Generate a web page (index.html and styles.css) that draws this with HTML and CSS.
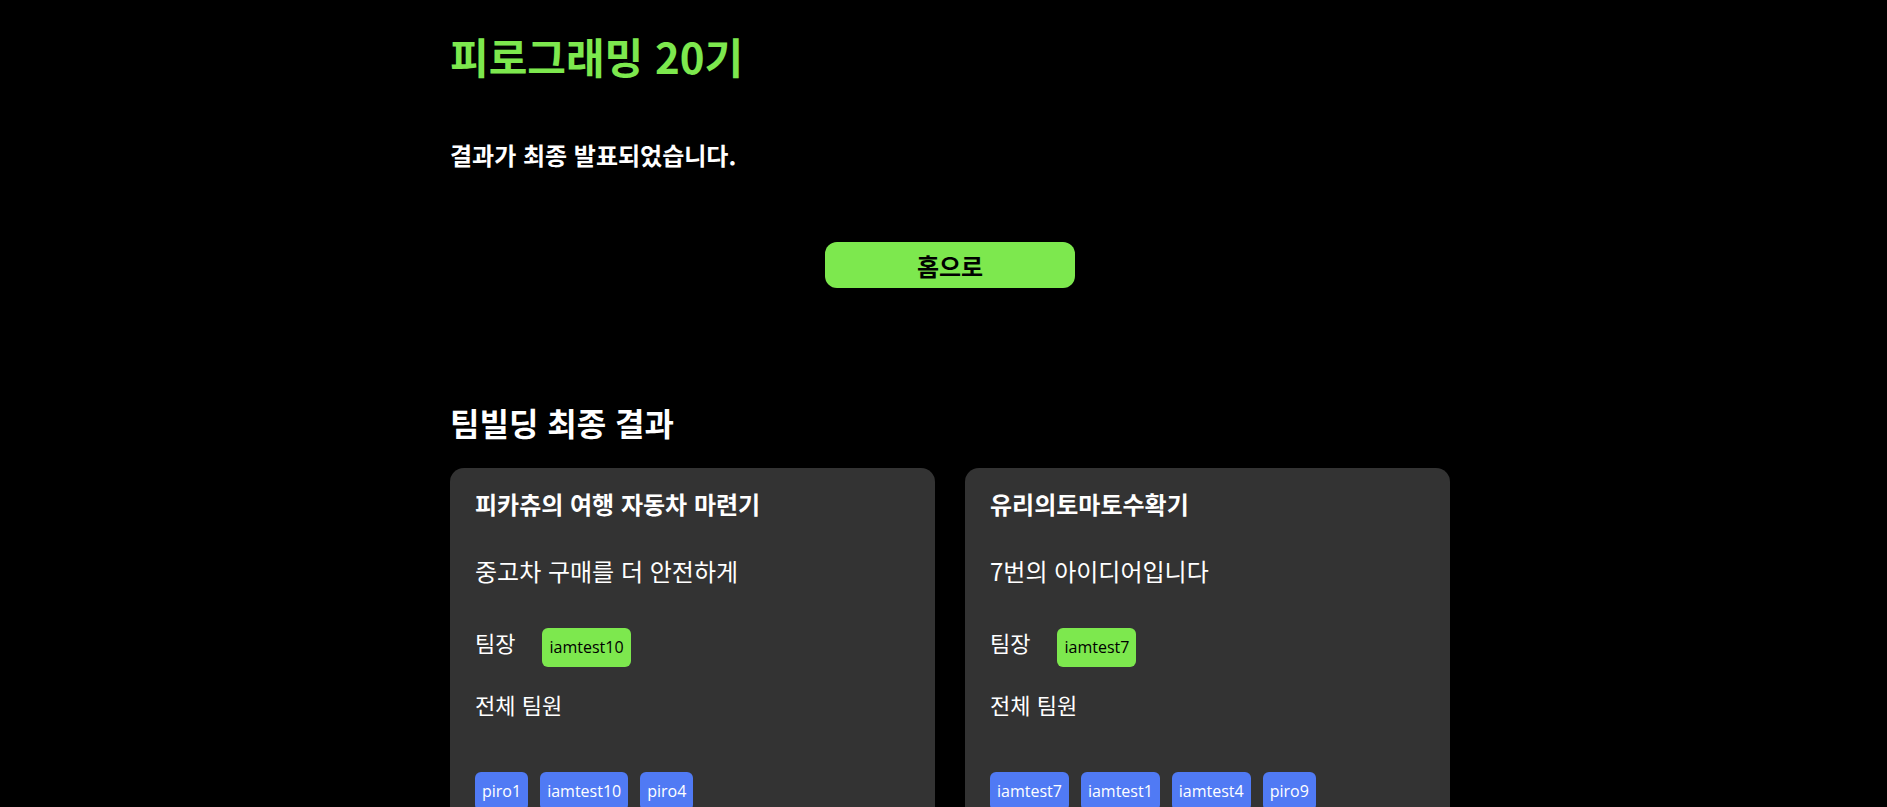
FILE: index.html
```html
<!DOCTYPE html>
<html lang="ko">
<head>
<meta charset="utf-8">
<title>피로그래밍 20기</title>
<link rel="stylesheet" href="styles.css">
</head>
<body>
<main class="page">
  <h1 class="title">피로그래밍 20기</h1>
  <p class="notice">결과가 최종 발표되었습니다.</p>
  <div class="actions"><a class="home-btn" href="#">홈으로</a></div>
  <h2 class="section-title">팀빌딩 최종 결과</h2>
  <div class="cards">
    <section class="card">
      <h3 class="card-title">피카츄의 여행 자동차 마련기</h3>
      <p class="card-desc">중고차 구매를 더 안전하게</p>
      <div class="leader-row">
        <span class="label">팀장</span>
        <span class="tag tag-leader">iamtest10</span>
      </div>
      <p class="label members-label">전체 팀원</p>
      <div class="members">
        <span class="tag tag-member">piro1</span>
        <span class="tag tag-member">iamtest10</span>
        <span class="tag tag-member">piro4</span>
      </div>
    </section>
    <section class="card">
      <h3 class="card-title">유리의토마토수확기</h3>
      <p class="card-desc">7번의 아이디어입니다</p>
      <div class="leader-row">
        <span class="label">팀장</span>
        <span class="tag tag-leader">iamtest7</span>
      </div>
      <p class="label members-label">전체 팀원</p>
      <div class="members">
        <span class="tag tag-member">iamtest7</span>
        <span class="tag tag-member">iamtest1</span>
        <span class="tag tag-member">iamtest4</span>
        <span class="tag tag-member">piro9</span>
      </div>
    </section>
  </div>
</main>
</body>
</html>
```
FILE: styles.css
```css
html, body {
  margin: 0;
  background: #000;
}
body {
  padding-left: 13px;
  font-family: "Noto Sans CJK KR", "Noto Sans", sans-serif;
  color: #fff;
}
.page {
  width: 1000px;
  margin: 0 auto;
}
.title {
  margin: 32px 0 0;
  font-size: 42px;
  line-height: 48px;
  font-weight: 700;
  color: #7de84e;
}
.notice {
  margin: 60px 0 0;
  font-size: 24px;
  line-height: 30px;
  font-weight: 700;
}
.actions {
  display: flex;
  justify-content: center;
  margin-top: 72px;
}
.home-btn {
  width: 250px;
  height: 46px;
  border-radius: 12px;
  background: #7de84e;
  color: #000;
  text-decoration: none;
  font-size: 24px;
  font-weight: 700;
  display: flex;
  align-items: center;
  justify-content: center;
}
.section-title {
  margin: 114px 0 0;
  font-size: 32px;
  line-height: 40px;
  font-weight: 700;
}
.cards {
  display: grid;
  grid-template-columns: 485px 485px;
  gap: 30px;
  margin-top: 26px;
}
.card {
  background: #333;
  border-radius: 14px;
  padding: 21px 25px 30px;
  min-height: 400px;
}
.card-title {
  margin: 0;
  font-size: 24px;
  line-height: 30px;
  font-weight: 700;
}
.card-desc {
  margin: 36px 0 0;
  font-size: 24px;
  line-height: 32px;
}
.leader-row {
  display: flex;
  align-items: flex-start;
  margin-top: 40px;
}
.label {
  font-size: 22px;
  line-height: 30px;
}
.leader-row .label {
  margin-right: 27px;
}
.leader-row .tag {
  margin-top: 1px;
}
.members-label {
  margin: 22px 0 0;
}
.members {
  display: flex;
  gap: 12px;
  margin-top: 53px;
}
.tag {
  display: inline-block;
  padding: 6px 7px;
  border-radius: 6px;
  font-family: "Open Sans", "Noto Sans", sans-serif;
  font-size: 16px;
  line-height: 27px;
}
.tag-leader {
  background: #7de84e;
  color: #000;
}
.tag-member {
  background: #507af4;
  color: #fff;
}
```
